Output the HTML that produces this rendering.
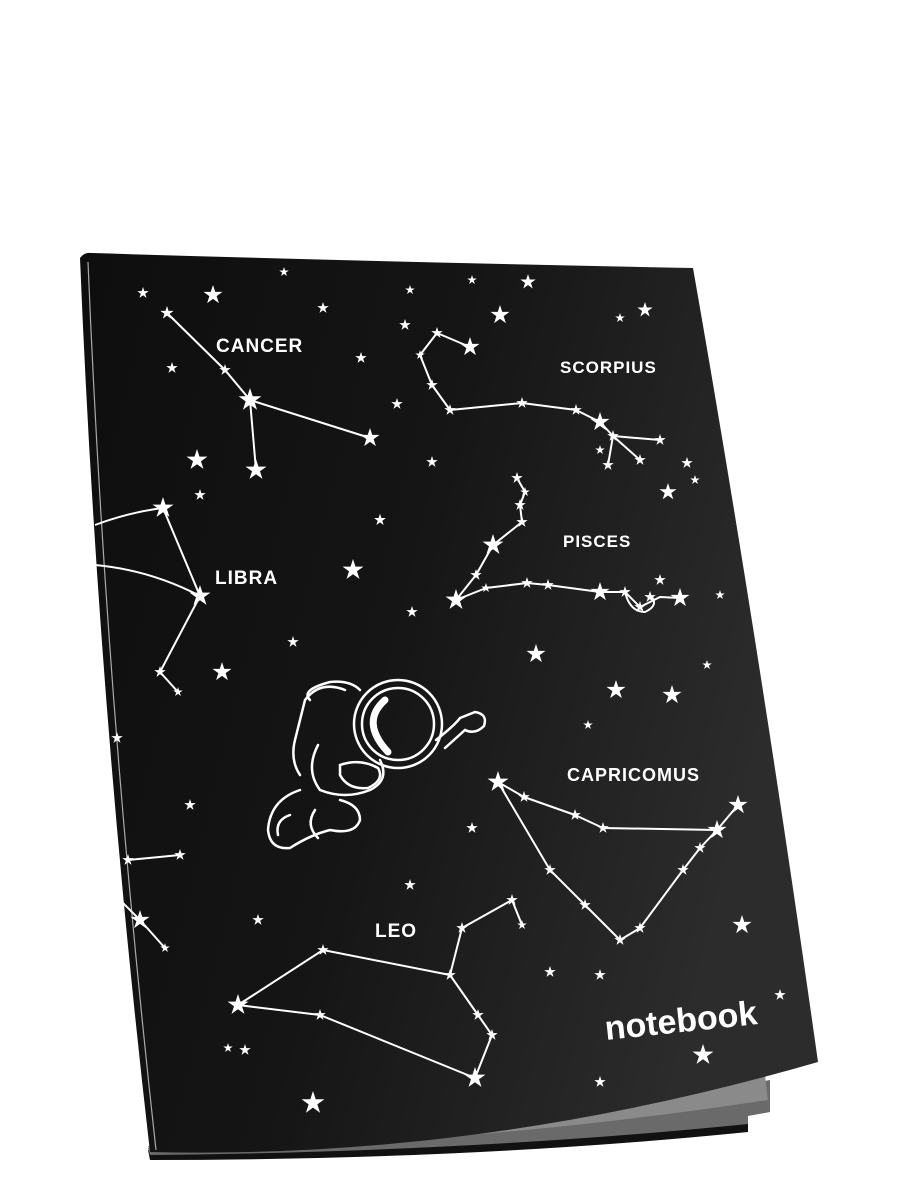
<!DOCTYPE html>
<html><head><style>html,body{margin:0;padding:0;background:#fff;width:900px;height:1200px;overflow:hidden}svg{display:block}</style></head>
<body>
<svg id="c" width="900" height="1200" viewBox="0 0 900 1200" xmlns="http://www.w3.org/2000/svg">
<defs>
<linearGradient id="g" x1="0" y1="0" x2="1" y2="0.3">
<stop offset="0" stop-color="#0e0e0e"/><stop offset="0.5" stop-color="#151515"/><stop offset="1" stop-color="#2c2c2c"/>
</linearGradient>
<polygon id="s" points="0,-1 0.225,-0.309 0.951,-0.309 0.363,0.118 0.588,0.809 0,0.382 -0.588,0.809 -0.363,0.118 -0.951,-0.309 -0.225,-0.309" fill="#fff"/>
</defs>
<!-- back & pages -->
<path d="M148,1150 Q470,1150 748,1100 L748,1132 Q470,1160 150,1160 Z" fill="#111"/>
<path d="M148,1148 Q470,1140 770,1080 L770,1112 L748,1116 L748,1124 Q470,1152 150,1155 Z" fill="#6a6a6a"/>
<path d="M148,1146 Q470,1135 765,1075 L768,1100 Q470,1145 150,1152 Z" fill="#8a8a8a"/>
<!-- cover -->
<path d="M80,258 Q84,252 92,253 Q380,262 693,268 Q760,650 818,1062 Q480,1160 150,1152 Q98,700 80,258 Z" fill="url(#g)"/>
<path d="M88,262 Q106,700 156,1150" stroke="#aaa" stroke-width="1.2" fill="none"/>
<g stroke="#fff" stroke-width="2" fill="none" stroke-linejoin="round">
<polyline points="167,313 225,370 250,400 370,438"/><polyline points="250,400 256,470"/>
<polyline points="470,347 437,333 420,355 432,385 450,410 522,403 576,410 600,422 613,436 640,460"/><polyline points="613,436 608,465"/><polyline points="613,436 660,440"/>
<polyline points="517,478 525,492 520,505 522,522 493,545 476,575 456,600 486,588 527,583 548,585 600,592 625,592 640,607 660,597 680,598"/><path d="M625,592 Q630,612 645,612 Q660,605 650,595"/>
<path d="M95,525 Q130,512 163,508 L200,596 L160,672 L178,692"/><path d="M95,565 Q150,570 200,596"/>
<polyline points="128,860 180,855"/><polyline points="120,900 140,920 165,948"/>
<polyline points="498,782 524,797 575,815 603,828 717,830 738,805"/><polyline points="498,782 550,870 585,905 620,940 640,928 683,870 700,848 717,830"/>
<polyline points="238,1005 323,950 450,975 462,928 512,900 522,925"/><polyline points="238,1005 320,1015 475,1078 492,1035 478,1015 450,975"/>
</g>
<!-- astronaut -->
<g stroke="#fff" stroke-width="2.5" fill="none" stroke-linecap="round">
<circle cx="398" cy="724" r="44"/><circle cx="398" cy="724" r="36"/>
<path d="M385,700 Q360,722 388,752" stroke-width="7"/>
<path d="M345,690 Q320,680 305,700 L295,740 Q290,760 300,775"/>
<path d="M310,700 Q300,690 330,682 Q350,680 360,690"/>
<path d="M318,745 Q305,770 320,790 Q345,800 370,790 Q390,780 380,760"/>
<path d="M340,765 Q360,758 378,768 Q385,780 368,788 Q348,790 340,775 Z"/>
<path d="M300,790 Q270,800 268,830 Q270,850 290,848 Q310,835 330,830 Q355,835 360,820 Q360,805 340,800"/>
<path d="M290,815 Q275,820 278,835"/><path d="M315,810 Q305,825 318,838"/>
<path d="M436,740 Q455,725 460,718 L475,712 Q488,714 484,726 Q475,735 465,730 L445,748"/>
</g>
<g font-family="'Liberation Sans',sans-serif" fill="#fff" font-weight="bold">
<text x="216" y="352" font-size="19" letter-spacing="1">CANCER</text>
<text x="560" y="373" font-size="17" letter-spacing="1">SCORPIUS</text>
<text x="563" y="547" font-size="17" letter-spacing="1">PISCES</text>
<text x="215" y="584" font-size="19" letter-spacing="1">LIBRA</text>
<text x="567" y="781" font-size="18" letter-spacing="1">CAPRICOMUS</text>
<text x="375" y="937" font-size="19" letter-spacing="1">LEO</text>
<text x="606" y="1040" font-size="34" transform="rotate(-6 606 1040)">notebook</text>
</g>
<g id="stars"></g>
</svg>
<script>
var S=[[143,293,6],[213,295,10],[284,272,5],[323,308,6],[167,313,7],[225,370,6],[172,368,6],[250,400,12],[370,438,10],[197,460,11],[256,470,11],[361,358,6],[397,404,6],[432,462,6],[380,520,6],[200,495,6],
[405,325,6],[437,333,6],[470,347,10],[420,355,5],[432,385,6],[450,410,6],[522,403,6],[576,410,6],[600,422,10],[613,436,6],[640,460,6],[608,465,6],[600,450,5],[660,440,6],[687,463,6],[668,492,9],[695,480,5],[500,315,10],[528,282,8],[472,280,5],[620,318,5],[645,310,8],[410,290,5],
[517,478,6],[525,492,5],[520,505,6],[522,522,6],[493,545,11],[476,575,6],[456,600,11],[486,588,5],[527,583,6],[548,585,6],[600,592,10],[625,592,6],[640,607,6],[650,597,6],[660,580,6],[680,598,10],[720,595,5],[412,612,6],[536,654,10],[616,690,10],[672,695,10],[707,665,5],[588,725,5],
[163,508,11],[200,596,11],[160,672,6],[178,692,5],[222,672,10],[293,642,6],[353,570,11],[380,520,6],
[117,738,6],[190,805,6],[128,860,6],[180,855,6],[140,920,10],[165,948,5],
[498,782,11],[524,797,6],[575,815,6],[603,828,6],[717,830,10],[738,805,10],[550,870,6],[585,905,6],[620,940,6],[640,928,6],[683,870,6],[700,848,6],[472,828,6],[410,885,6],[742,925,10],[550,972,6],[600,975,6],
[512,900,6],[522,925,5],[462,928,6],[450,975,6],[478,1015,6],[492,1035,6],[475,1078,11],[323,950,6],[320,1015,6],[238,1005,11],[245,1050,6],[228,1048,5],[313,1103,12],[258,920,6],[703,1055,11],[600,1082,6],[780,995,6]];
var g=document.getElementById('stars'),h='';
S.forEach(function(s){h+='<use href="#s" transform="translate('+s[0]+','+s[1]+') scale('+s[2]+')"/>';});
g.innerHTML=h;
</script>
</body></html>
